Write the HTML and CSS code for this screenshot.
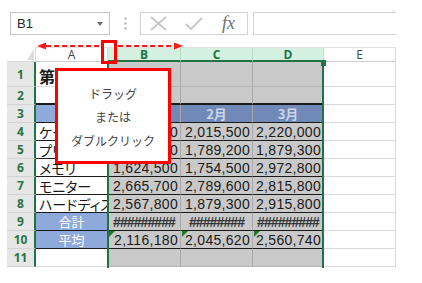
FILE: index.html
```html
<!DOCTYPE html>
<html lang="ja">
<head>
    <meta charset="UTF-8">
    <title>列幅の調整</title>
    <link rel="stylesheet" href="styles.css">
</head>
<body>
    <div class="app">
        <div class="formula-bar">
            <div class="name-box"><span>B1</span><span class="caret"></span></div>
            <div class="grip">
                <svg width="3" height="13"><circle cx="1.5" cy="1.5" r="1.2"/><circle cx="1.5" cy="6.5" r="1.2"/><circle cx="1.5" cy="11.5" r="1.2"/></svg>
            </div>
            <div class="fx-buttons">
                <svg class="icon-x" width="17" height="15"><path d="M1 1 L16 14 M16 1 L1 14"/></svg>
                <svg class="icon-check" width="18" height="13"><path d="M1 7 L6 12 L17 1"/></svg>
                <span class="fx">fx</span>
            </div>
            <div class="formula-input"></div>
        </div>

        <div class="sheet">
            <div class="cell corner"></div>
            <div class="cell ch">A</div>
            <div class="cell ch sel">B</div>
            <div class="cell ch sel">C</div>
            <div class="cell ch sel">D</div>
            <div class="cell ch">E</div>

            <div class="cell rh">1</div>
            <div class="cell label title-cell"><span class="title">第1四半期売上表</span></div>
            <div class="cell g"></div>
            <div class="cell g"></div>
            <div class="cell g"></div>
            <div class="cell"></div>

            <div class="cell rh">2</div>
            <div class="cell bb2"></div>
            <div class="cell g bb2"></div>
            <div class="cell g bb2"></div>
            <div class="cell g bb2"></div>
            <div class="cell"></div>

            <div class="cell rh">3</div>
            <div class="cell blue bb"></div>
            <div class="cell g hdr bb">1月</div>
            <div class="cell g hdr bb">2月</div>
            <div class="cell g hdr bb">3月</div>
            <div class="cell"></div>

            <div class="cell rh">4</div>
            <div class="cell label bb">ケーブル</div>
            <div class="cell g num bb">1,982,500</div>
            <div class="cell g num bb">2,015,500</div>
            <div class="cell g num bb">2,220,000</div>
            <div class="cell"></div>

            <div class="cell rh">5</div>
            <div class="cell label bb">プリンター</div>
            <div class="cell g num bb">1,725,400</div>
            <div class="cell g num bb">1,789,200</div>
            <div class="cell g num bb">1,879,300</div>
            <div class="cell"></div>

            <div class="cell rh">6</div>
            <div class="cell label bb">メモリ</div>
            <div class="cell g num bb">1,624,500</div>
            <div class="cell g num bb">1,754,500</div>
            <div class="cell g num bb">2,972,800</div>
            <div class="cell"></div>

            <div class="cell rh">7</div>
            <div class="cell label bb">モニター</div>
            <div class="cell g num bb">2,665,700</div>
            <div class="cell g num bb">2,789,600</div>
            <div class="cell g num bb">2,815,800</div>
            <div class="cell"></div>

            <div class="cell rh">8</div>
            <div class="cell label bb">ハードディスク</div>
            <div class="cell g num bb">2,567,800</div>
            <div class="cell g num bb">1,879,300</div>
            <div class="cell g num bb">2,915,800</div>
            <div class="cell"></div>

            <div class="cell rh">9</div>
            <div class="cell sum bb">合計</div>
            <div class="cell g hash bb">#########</div>
            <div class="cell g hash bb">########</div>
            <div class="cell g hash bb">#########</div>
            <div class="cell"></div>

            <div class="cell rh">10</div>
            <div class="cell sum bb">平均</div>
            <div class="cell g num bb warn">2,116,180</div>
            <div class="cell g num bb warn">2,045,620</div>
            <div class="cell g num bb warn">2,560,740</div>
            <div class="cell"></div>

            <div class="cell rh">11</div>
            <div class="cell"></div>
            <div class="cell g"></div>
            <div class="cell g"></div>
            <div class="cell g"></div>
            <div class="cell"></div>
        </div>

        <!-- 選択範囲の枠 -->
        <div class="sel-line sel-left"></div>
        <div class="sel-line sel-right"></div>
        <div class="fill-handle"></div>

        <!-- 説明の注記 -->
        <svg class="drag-arrow" width="148" height="10">
            <polygon points="1,5 10,1.5 10,8.5"/>
            <polygon points="147,5 138,1.5 138,8.5"/>
            <path d="M10 5 H65 M82 5 H138"/>
        </svg>
        <div class="drag-handle"></div>
        <div class="tip">
            ドラッグ<br>
            または<br>
            ダブルクリック
        </div>
    </div>
</body>
</html>
```

FILE: styles.css
```css
body {
    margin: 0;
    font-family: "Noto Sans CJK JP", sans-serif;
    background-color: #fff;
}
.app {
    position: relative;
    width: 422px;
    height: 283px;
    overflow: hidden;
}

/* 数式バー */
.formula-bar {
    display: flex;
    height: 23px;
    padding: 12px 0 0 10px;
}
.name-box {
    width: 100px;
    box-sizing: border-box;
    border: 1px solid #c6c6c6;
    display: flex;
    align-items: center;
    padding-left: 6px;
    font: 13px "Liberation Sans", sans-serif;
    color: #262626;
}
.caret {
    margin-left: auto;
    margin-right: 6px;
    border-left: 3px solid transparent;
    border-right: 3px solid transparent;
    border-top: 4px solid #6b6b6b;
}
.grip {
    width: 30px;
    display: flex;
    align-items: center;
    justify-content: center;
}
.grip circle {
    fill: #b8b8b8;
}
.fx-buttons {
    width: 108px;
    box-sizing: border-box;
    border: 1px solid #d4d4d4;
    display: flex;
    align-items: center;
}
.fx-buttons path {
    fill: none;
    stroke: #c6c6c6;
    stroke-width: 1.8;
}
.icon-x {
    margin-left: 9px;
}
.icon-check {
    margin-left: 18px;
}
.fx {
    margin-left: 19px;
    font: italic 18px "Liberation Serif", serif;
    color: #707070;
}
.formula-input {
    width: 143px;
    margin-left: 5px;
    box-sizing: border-box;
    border: 1px solid #d4d4d4;
    border-right: none;
}

/* シート */
.sheet {
    display: grid;
    grid-template-columns: 29px 72px 73px 72px 71px 72px;
    grid-template-rows: 15px 25px repeat(10, 18px);
    margin: 12px 0 0 7px;
    width: 389px;
}
.cell {
    box-sizing: border-box;
    border-right: 1px solid #dadada;
    border-bottom: 1px solid #dadada;
    display: flex;
    align-items: center;
    overflow: hidden;
    white-space: nowrap;
    position: relative;
    font-size: 14px;
    color: #1a1a1a;
}
.corner {
    background-color: #fff;
}
.corner::after {
    content: "";
    position: absolute;
    right: 1px;
    bottom: 1px;
    border-left: 7px solid transparent;
    border-bottom: 11px solid #dcdcdc;
}
.ch {
    justify-content: center;
    font: 12px "Open Sans", sans-serif;
    color: #444;
    border-top: 1px solid #e2e2e2;
    border-bottom-color: #d0d0d0;
}
.ch.sel {
    background-color: #d3f0e0;
    color: #217346;
    font-weight: bold;
    border-right-color: #bcd9c6;
    border-bottom: 2px solid #217346;
}
.rh {
    justify-content: center;
    background-color: #e6e6e6;
    border-right: 2px solid #217346;
    border-bottom-color: #d2d2d2;
    font: bold 12px "Open Sans", sans-serif;
    color: #2a7345;
}
.g {
    background-color: #c9c9c9;
    border-right-color: #a9a9a9;
    border-bottom-color: #b4b4b4;
}
.bb {
    border-bottom-color: #1a1a1a;
}
.bb2 {
    border-bottom: 2px solid #1a1a1a;
}
.label {
    padding-left: 3px;
    font-feature-settings: "palt";
}
.title-cell {
    overflow: visible;
    padding-top: 3px;
}
.title {
    position: relative;
    z-index: 1;
    font-size: 16px;
    font-weight: bold;
}
.blue {
    background-color: #8eaadb;
}
.hdr {
    background-color: #7189b6;
    color: #ccd5e8;
    justify-content: center;
    font-size: 13px;
    font-weight: bold;
}
.sum {
    background-color: #8eaadb;
    color: #fff;
    justify-content: center;
    font-size: 13px;
}
.num {
    justify-content: flex-end;
    padding-right: 2px;
    font-family: "Liberation Sans", sans-serif;
    letter-spacing: 0.3px;
}
.hash {
    justify-content: center;
    font-family: "Liberation Sans", sans-serif;
    font-size: 14px;
    font-weight: bold;
    letter-spacing: -0.9px;
    color: #333;
}
.warn::before {
    content: "";
    position: absolute;
    left: 1px;
    top: 0;
    border-top: 6px solid #1f7a30;
    border-right: 6px solid transparent;
}

/* 選択範囲 */
.sel-line {
    position: absolute;
    top: 62px;
    width: 2px;
    height: 206px;
    background-color: #217346;
}
.sel-left {
    left: 107px;
}
.sel-right {
    left: 322px;
}
.fill-handle {
    position: absolute;
    left: 321px;
    top: 60px;
    width: 5px;
    height: 6px;
    background-color: #217346;
}

/* 注記 */
.drag-arrow {
    position: absolute;
    left: 36px;
    top: 41px;
}
.drag-arrow polygon {
    fill: #ff1a1a;
}
.drag-arrow path {
    stroke: #ff1a1a;
    stroke-width: 2;
    stroke-dasharray: 5 3;
}
.drag-handle {
    position: absolute;
    left: 101px;
    top: 40px;
    width: 16px;
    height: 24px;
    box-sizing: border-box;
    border: 3px solid #ff0000;
}
.tip {
    position: absolute;
    z-index: 5;
    left: 55px;
    top: 68px;
    width: 116px;
    height: 96px;
    box-sizing: border-box;
    border: 3px solid #ff0000;
    background-color: #fff;
    padding-top: 11px;
    text-align: center;
    font-size: 12px;
    line-height: 23.3px;
    color: #444;
}
```
